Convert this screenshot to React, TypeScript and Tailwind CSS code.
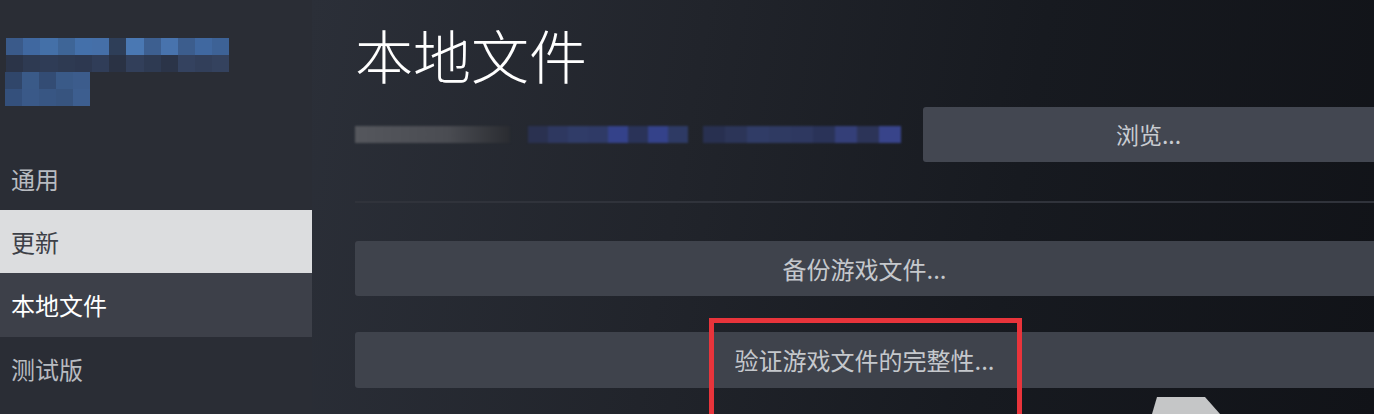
import React from 'react';

const cjk = "font-['Noto_Sans_CJK_SC','Noto_Sans',sans-serif]";

// pixelated (blurred) game name in the sidebar header
const nameRow1 = [
  'bg-[#3a5a8a]', 'bg-[#4068a0]', 'bg-[#4470a8]', 'bg-[#3e6597]', 'bg-[#4470aa]', 'bg-[#456fa8]',
  'bg-[#2e3e58]', 'bg-[#4a78b3]', 'bg-[#3d5f90]', 'bg-[#4873ad]', 'bg-[#3c5d8d]', 'bg-[#4068a0]', 'bg-[#3d6296]',
];
const nameRow2 = [
  'bg-[#2b3448]', 'bg-[#2e3a52]', 'bg-[#2f3c56]', 'bg-[#2e3a52]', 'bg-[#2d3850]', 'bg-[#303d58]',
  'bg-[#2a3244]', 'bg-[#323f5a]', 'bg-[#2e3a52]', 'bg-[#2b3448]', 'bg-[#34425f]', 'bg-[#323f5a]', 'bg-[#34425e]',
];
const nameRow3 = ['bg-[#30466a]', 'bg-[#3a5a88]', 'bg-[#334c74]', 'bg-[#3a5a88]', 'bg-[#3c5c8c]'];
const nameRow4 = ['bg-[#34507c]', 'bg-[#3a5988]', 'bg-[#385683]', 'bg-[#37547f]', 'bg-[#3d5e8f]'];

const pathBlue1 = ['bg-[#2a3150]', 'bg-[#2e3860]', 'bg-[#303c68]', 'bg-[#2f3a66]', 'bg-[#34428a]', 'bg-[#2a3358]', 'bg-[#34428a]', 'bg-[#2e3a64]'];
const pathBlue2 = ['bg-[#283050]', 'bg-[#2c3558]', 'bg-[#303c66]', 'bg-[#2f3a62]', 'bg-[#2e3860]', 'bg-[#2a3358]', 'bg-[#343f78]', 'bg-[#2c3458]', 'bg-[#38448a]'];

const navItems = [
  { label: '通用', h: 'h-[63px]', cls: 'text-[#b8bbc0]' },
  { label: '更新', h: 'h-[63px]', cls: 'bg-[#dcdddf] text-[#3d4047]' },
  { label: '本地文件', h: 'h-[64px]', cls: 'bg-[#3d4049] text-white' },
  { label: '测试版', h: 'h-[63px]', cls: 'text-[#b8bbc0]' },
];

function Sidebar() {
  return (
    <div className="w-[312px] flex-shrink-0 bg-[#2a2d35] flex flex-col">
      {/* ── Header (blurred name) ── */}
      <div className="h-[147px] pt-[38px] pl-[6px] blur-[0.6px]">
        <div className="flex">
          {nameRow1.map((c, i) => (
            <div key={i} className={`w-[17.2px] h-[17px] ${c}`} />
          ))}
        </div>
        <div className="flex">
          {nameRow2.map((c, i) => (
            <div key={i} className={`w-[17.2px] h-[17px] ${c}`} />
          ))}
        </div>
        <div className="flex -ml-[1px]">
          {nameRow3.map((c, i) => (
            <div key={i} className={`w-[17px] h-[17px] ${c}`} />
          ))}
        </div>
        <div className="flex -ml-[1px]">
          {nameRow4.map((c, i) => (
            <div key={i} className={`w-[17px] h-[17px] ${c}`} />
          ))}
        </div>
      </div>

      {navItems.map((it) => (
        <div key={it.label} className={`${it.h} flex items-center pl-[11px] text-[24px] ${it.cls}`}>
          {it.label}
        </div>
      ))}
    </div>
  );
}

function WideButton({ label, h }: { label: string; h: string }) {
  return (
    <button
      type="button"
      className={`w-full ${h} rounded-l-[3px] bg-[#3f434c] text-[#c5c8cc] text-[24px] flex items-center justify-center`}
    >
      {label}
    </button>
  );
}

export default function App() {
  return (
    <div className={`relative flex w-[1374px] h-[414px] overflow-hidden ${cjk}`}>
      <Sidebar />

      {/* ── Main ── */}
      <div className="flex-1 flex flex-col pl-[43px] bg-[linear-gradient(100deg,#2b2f38_0%,#21242b_35%,#171a20_65%,#111318_100%)]">
        <h1 className="mt-[25px] h-[58px] text-[58px] leading-none font-light text-white">本地文件</h1>

        <div className="mt-[24px] h-[55px] flex items-stretch">
          {/* blurred install path */}
          <div className="flex-1 flex items-start pt-[19px] blur-[1px]">
            <div className="w-[155px] h-[17px] bg-[linear-gradient(90deg,#55575d,#4a4c52_60%,#2a2c31)]" />
            <div className="ml-[18px] flex">
              {pathBlue1.map((c, i) => (
                <div key={i} className={`w-[20px] h-[17px] ${c}`} />
              ))}
            </div>
            <div className="ml-[15px] flex">
              {pathBlue2.map((c, i) => (
                <div key={i} className={`w-[22px] h-[17px] ${c}`} />
              ))}
            </div>
          </div>
          <button
            type="button"
            className="w-[451px] rounded-l-[3px] bg-[#434751] text-[#c9ccd1] text-[23px] flex items-center justify-center"
          >
            浏览...
          </button>
        </div>

        <div className="mt-[39px] h-[2px] bg-[#30333b]" />

        <div className="mt-[38px]">
          <WideButton label="备份游戏文件..." h="h-[55px]" />
        </div>
        <div className="mt-[36px]">
          <WideButton label="验证游戏文件的完整性..." h="h-[56px]" />
        </div>
      </div>

      {/* ── Annotation overlay ── */}
      <div className="absolute left-[709px] top-[318px] w-[313px] h-[96px] border-[5px] border-b-0 border-[#e8343b]" />

      {/* ── Cursor fragment ── */}
      <svg className="absolute left-[1150px] top-[396px]" width="72" height="18" viewBox="0 0 72 18">
        <polygon points="7,1 55,1 70,18 2,18" fill="#c5c6c7" />
      </svg>
    </div>
  );
}
